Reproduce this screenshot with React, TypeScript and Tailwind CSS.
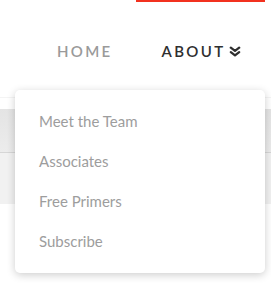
const items = ["Meet the Team", "Associates", "Free Primers", "Subscribe"];

function DoubleChevron() {
  return (
    <svg viewBox="0 0 12 11" className="ml-[4px] w-[12px] h-[11px]" fill="none" stroke="#2f2f2f" strokeWidth={2.3} strokeLinecap="round" strokeLinejoin="round">
      <path d="M1.8 1.6 L6 4.8 L10.2 1.6" />
      <path d="M1.8 6.2 L6 9.4 L10.2 6.2" />
    </svg>
  );
}

export default function App() {
  return (
    <div className="relative w-[271px] h-[287px] overflow-hidden bg-white font-['Lato',sans-serif]">
      <div className="ml-[136px] w-[129px] h-[2px] bg-[#f2311f]" />
      <nav className="flex items-center h-[95px] pt-[4px] pl-[57px] text-[15px] font-semibold tracking-[0.155em]">
        <span className="text-[#9a9a9a]">HOME</span>
        <span className="ml-[49px] flex items-center text-[#2f2f2f]">
          ABOUT
          <DoubleChevron />
        </span>
      </nav>
      <div className="h-[12px] border-t border-[#f4f4f4]" />
      <div className="h-[44px] bg-gradient-to-b from-[#e4e4e4] to-[#ececec] border-b border-[#d6d6d6]" />
      <div className="h-[51px] bg-[#f1f1f1]" />

      <div className="absolute left-[15px] top-[90px] w-[250px] h-[183px] rounded-[5px] bg-white shadow-[0_2px_8px_rgba(0,0,0,0.2)] py-[11px]">
        {items.map((item) => (
          <div key={item} className="h-[40px] flex items-center pl-[24px] text-[15px] text-[#9d9d9d]">
            {item}
          </div>
        ))}
      </div>
    </div>
  );
}
